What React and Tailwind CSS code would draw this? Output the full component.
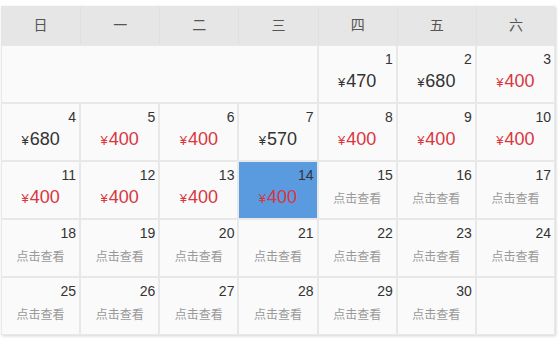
import React from "react";

const WEEK = ["日", "一", "二", "三", "四", "五", "六"];

const prices = {
  1: ["470", false],
  2: ["680", false],
  3: ["400", true],
  4: ["680", false],
  5: ["400", true],
  6: ["400", true],
  7: ["570", false],
  8: ["400", true],
  9: ["400", true],
  10: ["400", true],
  11: ["400", true],
  12: ["400", true],
  13: ["400", true],
  14: ["400", true],
};

function Cell({ day, selected }) {
  const p = prices[day];
  return (
    <div
      className={`h-[58px] border border-[#e8e8e8] flex flex-col ${
        selected ? "bg-[#5a9be0]" : "bg-[#fafafa]"
      }`}
    >
      <div className="pt-[4px] pr-[3px] text-right text-[14px] leading-[18px] text-[#333]">{day}</div>
      {p ? (
        <div
          className={`mt-[2px] text-center leading-[22px] ${
            p[1] ? "text-[#d9363e]" : "text-[#333]"
          }`}
        >
          <span className="text-[13px] mr-[1px]">¥</span>
          <span className="text-[18px]">{p[0]}</span>
        </div>
      ) : (
        <div className="mt-[6px] text-center text-[12px] leading-[18px] text-[#999]">点击查看</div>
      )}
    </div>
  );
}

export default function App() {
  const days = [];
  for (let d = 1; d <= 30; d++) days.push(d);

  return (
    <div
      className="w-[558px] h-[340px] bg-white pt-[6px] pl-[1px]"
      style={{ fontFamily: '"Liberation Sans", Arial, "Noto Sans CJK SC", sans-serif' }}
    >
      <div className="w-[554px] shadow-[1px_1px_3px_rgba(0,0,0,0.18)] bg-[#fafafa]">
        <div className="grid grid-cols-7 bg-[#e6e6e6] h-[39px]">
          {WEEK.map((w, i) => (
            <div
              key={w}
              className={`flex items-center justify-center text-[14px] text-[#555] ${
                i > 0 ? "border-l border-[#e0e0e0]" : ""
              }`}
            >
              {w}
            </div>
          ))}
        </div>
        <div className="grid grid-cols-7">
          {/* leading blank days before the 1st */}
          <div className="col-span-4 h-[58px] border border-[#e8e8e8] bg-[#fafafa]" />
          {days.map((d) => (
            <Cell key={d} day={d} selected={d === 14} />
          ))}
          <div className="h-[58px] border border-[#e8e8e8] bg-[#fafafa]" />
        </div>
      </div>
    </div>
  );
}
